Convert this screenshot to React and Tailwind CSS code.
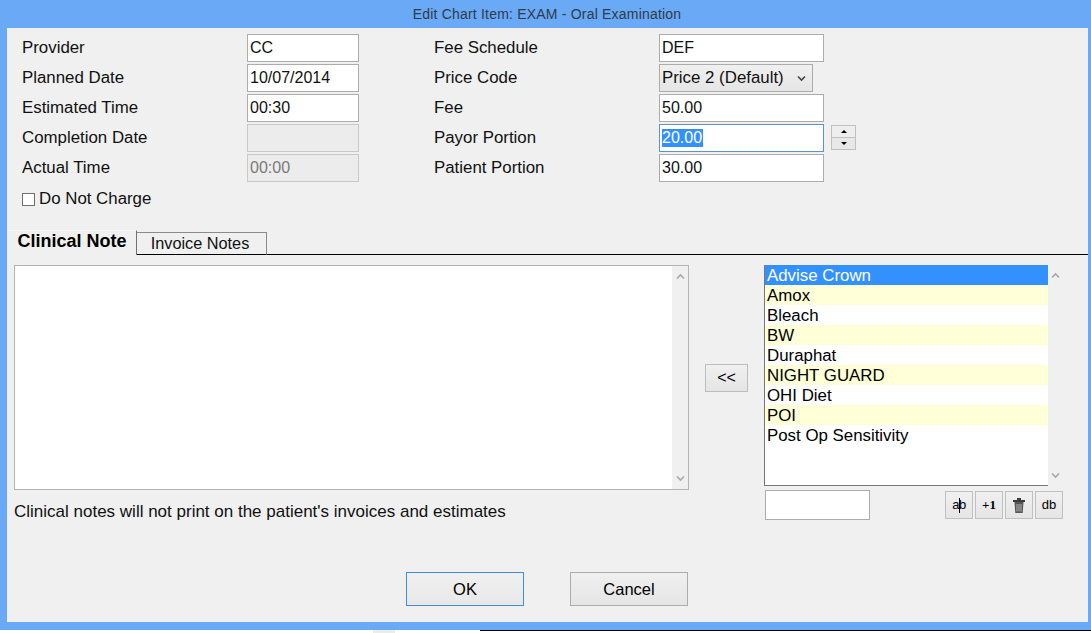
const leftRows = [
  { label: 'Provider', value: 'CC' },
  { label: 'Planned Date', value: '10/07/2014' },
  { label: 'Estimated Time', value: '00:30' },
  { label: 'Completion Date', value: '', disabled: true },
  { label: 'Actual Time', value: '00:00', disabled: true },
];

const phrases = ['Advise Crown', 'Amox', 'Bleach', 'BW', 'Duraphat', 'NIGHT GUARD', 'OHI Diet', 'POI', 'Post Op Sensitivity'];

function Field({ value, disabled, width, focused, children }) {
  const border = focused ? 'border-[#5b93d3]' : disabled ? 'border-[#c8c8c8]' : 'border-[#acacac]';
  return (
    <div
      className={`h-[28px] flex items-center px-[2px] border text-[16px] ${width} ${border} ${
        disabled ? 'bg-[#ececec] text-[#7a7a7a]' : 'bg-white'
      }`}
    >
      {children || value}
    </div>
  );
}

function Label({ children, width }) {
  return <div className={`h-[28px] flex items-center ${width}`}>{children}</div>;
}

function Chevron({ up, color = '#a8a8a8' }) {
  return (
    <svg width="9" height="7" viewBox="0 0 9 7" fill="none">
      <path d={up ? 'M1 5.5 L4.5 2 L8 5.5' : 'M1 1.5 L4.5 5 L8 1.5'} stroke={color} strokeWidth="1.6" />
    </svg>
  );
}

function Scrollbar({ width }) {
  return (
    <div className={`${width} bg-[#f0f0f0] flex flex-col justify-between items-center py-[7px] shrink-0`}>
      <Chevron up />
      <Chevron />
    </div>
  );
}

function ToolButton({ children }) {
  return (
    <button className="relative w-[28px] h-[28px] flex items-center justify-center border border-[#c0c0c0] bg-gradient-to-b from-[#f0f0f0] to-[#e5e5e5] text-black">
      {children}
    </button>
  );
}

export default function App() {
  return (
    <div className="w-[1091px] h-[633px] overflow-hidden flex flex-col bg-[#69a9f5] text-[16.85px] text-[#111] font-['Liberation_Sans',Arial,sans-serif]">
      <div className="h-[28px] shrink-0 flex items-center justify-center text-[14px] text-[#2f3b4a] tracking-[0.2px] pl-[3px]">
        Edit Chart Item: EXAM - Oral Examination
      </div>

      <div className="ml-[7px] mr-[3px] h-[594px] shrink-0 bg-[#f0f0f0]">
        {/* top form */}
        <div className="flex pt-[6px] pl-[15px]">
          <div className="w-[412px]">
            <div className="flex flex-col gap-[2px]">
              {leftRows.map((row) => (
                <div key={row.label} className="flex">
                  <Label width="w-[225px]">{row.label}</Label>
                  <Field value={row.value} disabled={row.disabled} width="w-[112px]" />
                </div>
              ))}
            </div>
            <div className="flex items-center h-[20px] mt-[7px]">
              <span className="w-[13px] h-[13px] mr-[4px] border border-[#707070] bg-white" />
              Do Not Charge
            </div>
          </div>

          <div className="flex flex-col gap-[2px]">
            <div className="flex">
              <Label width="w-[225px]">Fee Schedule</Label>
              <Field value="DEF" width="w-[165px]" />
            </div>
            <div className="flex">
              <Label width="w-[225px]">Price Code</Label>
              <div className="w-[154px] h-[28px] flex items-center justify-between pl-[2px] pr-[6px] border border-[#acacac] bg-gradient-to-b from-[#f0f0f0] to-[#e5e5e5]">
                Price 2 (Default)
                <Chevron color="#444" />
              </div>
            </div>
            <div className="flex">
              <Label width="w-[225px]">Fee</Label>
              <Field value="50.00" width="w-[165px]" />
            </div>
            <div className="flex">
              <Label width="w-[225px]">Payor Portion</Label>
              <Field width="w-[165px]" focused>
                <span className="bg-[#3390ff] text-white leading-[18px] pr-[1px]">20.00</span>
              </Field>
              <div className="ml-[7px] mt-[1px] w-[25px] h-[25px] flex flex-col border border-[#c0c0c0]">
                <div className="flex-1 flex items-center justify-center bg-[#eeeeee] border-b border-[#c0c0c0]">
                  <span className="border-x-[3px] border-b-[3px] border-x-transparent border-b-black" />
                </div>
                <div className="flex-1 flex items-center justify-center bg-[#e8e8e8]">
                  <span className="border-x-[3px] border-t-[3px] border-x-transparent border-t-black" />
                </div>
              </div>
            </div>
            <div className="flex">
              <Label width="w-[225px]">Patient Portion</Label>
              <Field value="30.00" width="w-[165px]" />
            </div>
          </div>
        </div>

        {/* tabs */}
        <div className="flex items-end h-[25px] mt-[21px] pl-[1px]">
          <div className="w-[129px] h-[25px] flex items-center justify-center border-r border-[#707070] border-t border-t-[#f8f8f8] font-bold text-[18px] text-black pb-[3px]">
            Clinical Note
          </div>
          <div className="w-[130px] h-[23px] flex items-center justify-center border-t border-r border-[#8a8a8a] border-b border-b-black pr-[3px] text-[16.3px]">
            Invoice Notes
          </div>
          <div className="flex-1 border-b border-black" />
        </div>

        {/* tab body */}
        <div className="flex pt-[10px] pl-[7px]">
          <div className="w-[675px]">
            <div className="h-[225px] flex border border-[#b4b4b4] bg-white">
              <div className="flex-1" />
              <Scrollbar width="w-[16px]" />
            </div>
            <div className="mt-[11px] h-[22px] flex items-center text-[17px]">
              Clinical notes will not print on the patient's invoices and estimates
            </div>
          </div>

          <button className="ml-[16px] mt-[99px] w-[43px] h-[28px] flex items-center justify-center border border-[#bdbdbd] bg-gradient-to-b from-[#f0f0f0] to-[#e5e5e5] text-black text-[16px]">
            &lt;&lt;
          </button>

          <div className="ml-[16px] w-[299px]">
            <div className="h-[221px] flex">
              <div className="w-[284px] bg-white border-l border-b border-[#777777] leading-[21px]">
                {phrases.map((phrase, i) => (
                  <div
                    key={phrase}
                    className={`h-[20px] pl-[2px] ${
                      i === 0 ? 'bg-[#3390ff] text-white' : i % 2 === 1 ? 'bg-[#ffffd8] text-black' : 'text-black'
                    }`}
                  >
                    {phrase}
                  </div>
                ))}
              </div>
              <Scrollbar width="w-[15px]" />
            </div>
            <div className="flex justify-between items-start mt-[4px]">
              <div className="ml-[1px] w-[105px] h-[30px] border border-[#acacac] bg-white" />
              <div className="flex gap-[2px] mt-[1px]">
                <ToolButton>
                  <span className="text-[13px] tracking-[-0.5px]">ab</span>
                  <span className="absolute left-[13px] top-[6px] h-[15px] w-px bg-black" />
                </ToolButton>
                <ToolButton>
                  <span className="font-['Liberation_Serif',serif] font-bold text-[13px]">+1</span>
                </ToolButton>
                <ToolButton>
                  <svg width="14" height="17" viewBox="0 0 14 17">
                    <path d="M1 3 H13 V5 H1 Z M5 1 H9 V3 H5 Z" fill="#3a3a3a" />
                    <path d="M2.5 5 H11.5 L10.7 16 H3.3 Z" fill="#555" />
                    <path d="M5 7 V14.5 M7 7 V14.5 M9 7 V14.5" stroke="#ccc" strokeWidth="0.8" />
                  </svg>
                </ToolButton>
                <ToolButton>
                  <span className="text-[13px]">db</span>
                </ToolButton>
              </div>
            </div>
          </div>
        </div>

        {/* footer buttons */}
        <div className="flex gap-[46px] pl-[399px] mt-[49px] text-[16.5px]">
          <button className="w-[118px] h-[34px] border border-[#3f8fd8] bg-gradient-to-b from-[#f0f0f0] to-[#e8e8e8] text-black">OK</button>
          <button className="w-[118px] h-[34px] border border-[#acacac] bg-gradient-to-b from-[#f0f0f0] to-[#e5e5e5] text-black">Cancel</button>
        </div>
      </div>

      <div className="h-[8px] shrink-0" />
      <div className="flex-1 flex bg-white">
        <div className="w-[373px]" />
        <div className="w-[22px] bg-[#e8eee8]" />
        <div className="w-[85px]" />
        <div className="flex-1 h-px bg-black" />
      </div>
    </div>
  );
}
